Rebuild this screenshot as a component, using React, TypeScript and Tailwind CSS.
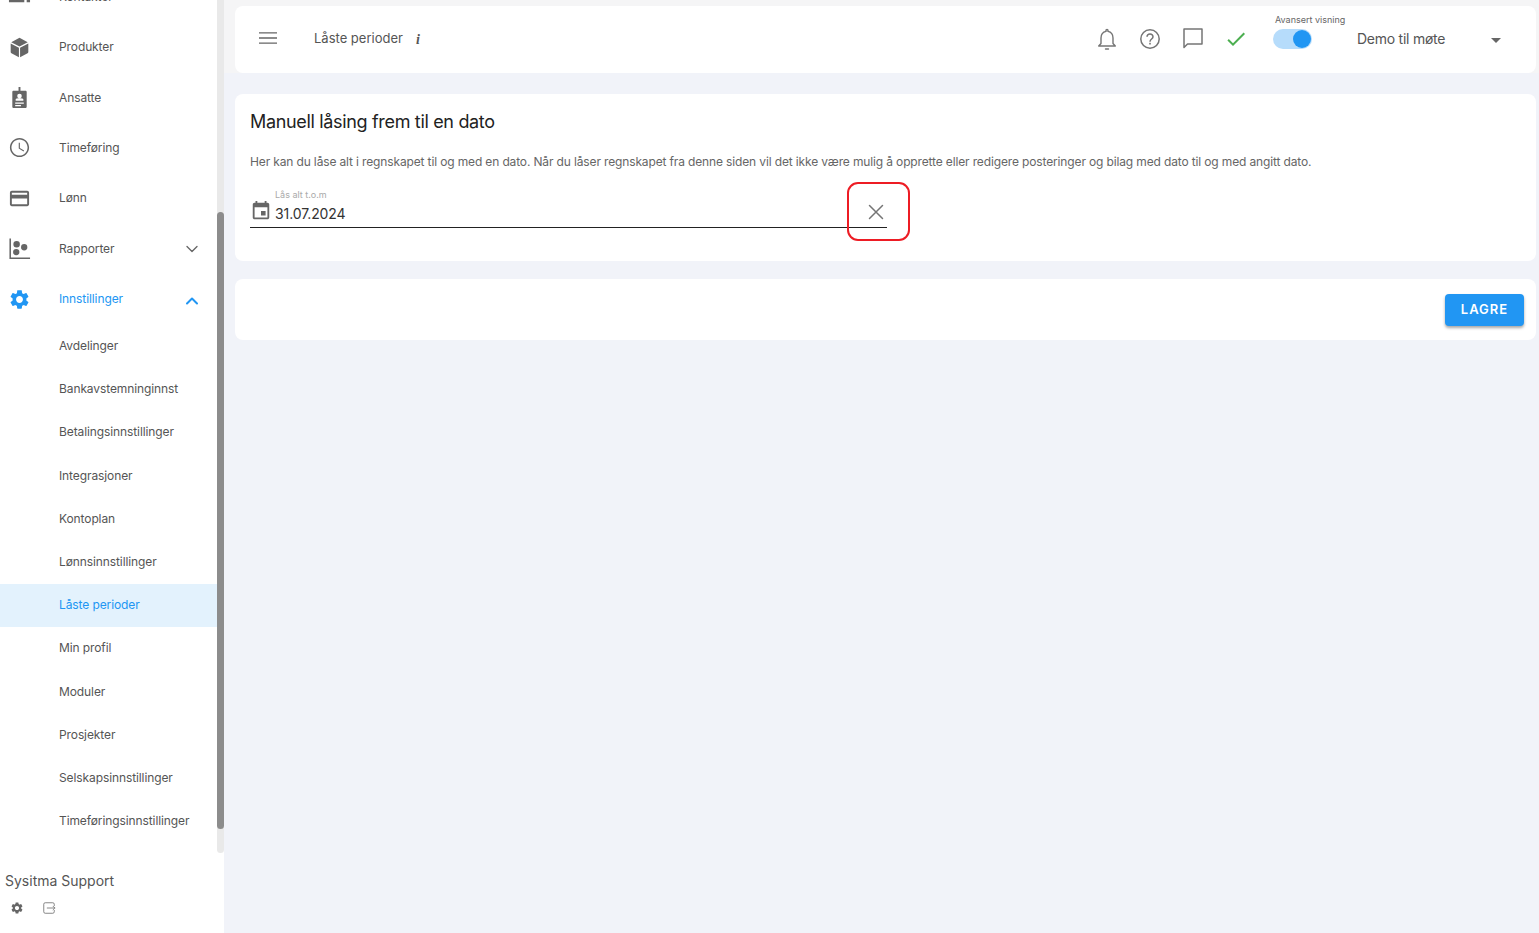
import React from "react";

const P = {
  menu: "M3 17.8h18v-1.4H3v1.4zm0-5.1h18v-1.4H3v1.4zM3 6.2v1.4h18V6.2H3z",
  gear: "M19.14 12.94c.04-.3.06-.61.06-.94 0-.32-.02-.64-.07-.94l2.03-1.58c.18-.14.23-.41.12-.61l-1.92-3.32c-.12-.22-.37-.29-.59-.22l-2.39.96c-.5-.38-1.03-.7-1.62-.94l-.36-2.54c-.04-.24-.24-.41-.48-.41h-3.84c-.24 0-.43.17-.47.41l-.36 2.54c-.59.24-1.13.57-1.62.94l-2.39-.96c-.22-.08-.47 0-.59.22L2.74 8.87c-.12.21-.08.47.12.61l2.03 1.58c-.05.3-.09.63-.09.94s.02.64.07.94l-2.03 1.58c-.18.14-.23.41-.12.61l1.92 3.32c.12.22.37.29.59.22l2.39-.96c.5.38 1.03.7 1.62.94l.36 2.54c.05.24.24.41.48.41h3.84c.24 0 .44-.17.47-.41l.36-2.54c.59-.24 1.13-.56 1.62-.94l2.39.96c.22.08.47 0 .59-.22l1.92-3.32c.12-.22.07-.47-.12-.61l-2.01-1.58zM12 15.6c-1.98 0-3.6-1.62-3.6-3.6s1.62-3.6 3.6-3.6 3.6 1.62 3.6 3.6-1.62 3.6-3.6 3.6z",
  event: "M17 12h-5v5h5v-5zM16 1v2H8V1H6v2H5c-1.11 0-1.99.9-1.99 2L3 19c0 1.1.89 2 2 2h14c1.1 0 2-.9 2-2V5c0-1.1-.9-2-2-2h-1V1h-2zm3 18H5V8h14v11z",
  check: "M9 16.17L4.83 12l-1.42 1.41L9 19 21 7l-1.41-1.41z",
  clock: "M11.99 2C6.47 2 2 6.48 2 12s4.47 10 9.99 10C17.52 22 22 17.52 22 12S17.52 2 11.99 2zM12 20.4c-4.64 0-8.4-3.76-8.4-8.4S7.36 3.6 12 3.6s8.4 3.76 8.4 8.4-3.76 8.4-8.4 8.4zm.4-13.4H11.2v6l5.05 3.05.6-1-4.45-2.65z",
  card: "M20 4H4c-1.11 0-1.99.89-1.99 2L2 18c0 1.11.89 2 2 2h16c1.11 0 2-.89 2-2V6c0-1.11-.89-2-2-2zm0 14H4v-6h16v6zm0-10H4V6h16v2z",
  drop: "M7 10l5 5 5-5z",
  cube: "M12 1.8l8.6 4.7-8.6 4.400-8.600-4.400zM2.800 7.900l8.600 4.400v10L3.600 18c-.5-.3-.8-.8-.8-1.400zM12.600 12.300l8.600-4.400v8.700c0 .6-.3 1.100-.8 1.400l-7.800 4.300z",
  badge: "M11 1h2v4h5.2c.7 0 1.3.6 1.3 1.3v15.4c0 .7-.6 1.3-1.3 1.3H5.800c-.7 0-1.300-.6-1.300-1.300V6.300c0-.7.6-1.300 1.300-1.300H11zM12 8a2.400 2.400 0 100 4.800A2.400 2.400 0 0012 8zM8 13.800v1.700h8v-1.700c0-.5-2-.9-4-.9s-4 .4-4 .9zM7.500 17.200v1.300h9v-1.300zM7.500 19.800v1.200h6v-1.200z",
  contact: "M1 0h16v18H1zM19.500 0H23v18h-3.500z",
  scatter: "M1.500 1.500h1.600v19.900H23V23H1.500zM9 4.200a3.400 3.400 0 110 6.800 3.400 3.400 0 010-6.800zM8.600 12.400a3.300 3.300 0 110 6.600 3.300 3.300 0 010-6.600zM16.900 7.400a3.300 3.300 0 110 6.600 3.300 3.300 0 010-6.600z",
};

const I = ({ d, className }: { d: string; className: string }) => (
  <svg viewBox="0 0 24 24" fill="currentColor" className={className}>
    <path d={d} />
  </svg>
);

const S = ({ d, className, w = 1.5 }: { d: string; className: string; w?: number }) => (
  <svg viewBox="0 0 24 24" fill="none" stroke="currentColor" strokeWidth={w} strokeLinejoin="round" strokeLinecap="round" className={className}>
    <path d={d} />
  </svg>
);

const NavRow = ({ icon, label, active, chevron }: { icon?: string; label: string; active?: boolean; chevron?: React.ReactNode }) => (
  <div className={`flex h-[50.45px] shrink-0 items-center ${active ? "text-[#2196f3]" : "text-[#555555]"}`}>
    <div className="flex w-[59px] shrink-0 pl-[8px]">
      {icon && <I d={icon} className={`size-[23px] ${active ? "text-[#2196f3]" : "text-[#666666]"}`} />}
    </div>
    <span className="flex-1 text-[12px] tracking-[-0.1px]">{label}</span>
    {chevron}
  </div>
);

const SubRow = ({ label, active }: { label: string; active?: boolean }) => (
  <div className={`flex h-[43.2px] shrink-0 items-center pl-[59px] text-[12px] tracking-[-0.1px] ${active ? "bg-[#e3f2fd] text-[#2196f3]" : "text-[#555555]"}`}>
    {label}
  </div>
);

const subs = [
  "Avdelinger",
  "Bankavstemninginnst",
  "Betalingsinnstillinger",
  "Integrasjoner",
  "Kontoplan",
  "Lønnsinnstillinger",
  "Låste perioder",
  "Min profil",
  "Moduler",
  "Prosjekter",
  "Selskapsinnstillinger",
  "Timeføringsinnstillinger",
];

export default function App() {
  return (
    <div className="flex h-[933px] w-[1539px] overflow-hidden bg-[#f1f3f9] font-['Inter','Liberation_Sans',sans-serif]">
      <aside className="flex w-[224px] shrink-0 flex-col bg-white">
        <div className="flex h-[853px] shrink-0 overflow-hidden">
          <nav className="flex min-w-0 flex-1 flex-col">
            <div className="-mt-[28.6px] flex flex-col">
              <NavRow icon={P.contact} label="Kontakter" />
              <NavRow icon={P.cube} label="Produkter" />
              <NavRow icon={P.badge} label="Ansatte" />
              <NavRow icon={P.clock} label="Timeføring" />
              <NavRow icon={P.card} label="Lønn" />
              <NavRow
                icon={P.scatter}
                label="Rapporter"
                chevron={<S d="M6 9l6 6 6-6" w={1.6} className="mr-[15px] size-[20px] text-[#666666]" />}
              />
              <NavRow
                icon={P.gear}
                label="Innstillinger"
                active
                chevron={<S d="M6 15l6-6 6 6" w={2.400} className="mr-[15px] mt-[4px] size-[20px]" />}
              />
              {subs.map((s) => (
                <SubRow key={s} label={s} active={s === "Låste perioder"} />
              ))}
            </div>
          </nav>
          <div className="w-[7px] shrink-0 rounded-b-[4px] bg-[#e9e9e9] pt-[212px]">
            <div className="h-[617px] rounded-[4px] bg-[#8c8c8c]" />
          </div>
        </div>
        <div className="pl-[5px] pt-[19px] text-[14px] leading-[18px] text-[#555555]">Sysitma Support</div>
        <div className="flex items-center gap-[18px] pl-[10px] pt-[11px] text-[#666666]">
          <I d={P.gear} className="size-[14px]" />
          <S d="M21 8V5.500A2.500 2.500 0 0018.500 3h-13A2.500 2.500 0 003 5.500v13A2.500 2.500 0 005.500 21h13a2.500 2.500 0 002.500-2.500V16M9 12h13M19 9l3 3-3 3" w={1.500} className="size-[14px] text-[#777777]" />
        </div>
      </aside>

      <main className="flex min-w-0 flex-1 flex-col">
        <div className="h-[73px] shrink-0 bg-[#f5f5f6] pl-[11px] pr-[3px] pt-[6px]">
          <header className="flex h-[67px] items-center rounded-[8px] bg-white">
            <I d={P.menu} className="-mt-[3px] ml-[21px] size-[24px] text-[#666666]" />
            <span className="-mt-[1px] ml-[34px] text-[13px] text-[#555555]">Låste perioder</span>
            <span className="-mt-[1px] ml-[13px] font-['Liberation_Serif',serif] text-[14px] font-bold italic text-[#555555]">i</span>
            <div className="ml-auto flex items-center">
              <S d="M12 2.500c.6 0 1 .4 1 1v.9c3 .6 5 3.100 5 6.600v5.500l2.300 2.500H3.700L6 16.500V11c0-3.500 2-6 5-6.600v-.9c0-.6.4-1 1-1zM10.500 22h3" w={1.400} className="-mt-[2px] size-[24px] text-[#757575]" />
              <svg viewBox="0 0 24 24" fill="none" className="-mt-[2px] ml-[19px] size-[24px] text-[#757575]">
                <circle cx="12" cy="12" r="9.200" stroke="currentColor" strokeWidth="1.500" />
                <path d="M9 9.800A3 3 0 0112 7a3 3 0 013 2.800c0 2.200-3 2.200-3 4.900" stroke="currentColor" strokeWidth="1.500" />
                <rect x="11.200" y="15.800" width="1.600" height="1.700" fill="currentColor" />
              </svg>
              <S d="M3 3h18v15H6.500L3 21.500z" w={1.500} className="-mt-[3px] ml-[19px] size-[24px] text-[#757575]" />
              <I d={P.check} className="-mt-[2px] ml-[19px] size-[24px] text-[#4caf50]" />
              <div className="ml-[25px] flex w-[84px] flex-col">
                <span className="-mt-[16px] mb-[4px] ml-[2px] text-[9px] leading-[11px] text-[#666666]">Avansert visning</span>
                <div className="flex h-[20px] w-[39px] items-center justify-end rounded-full bg-[#b6dcfb] pr-[1px]">
                  <div className="size-[18px] rounded-full bg-[#2196f3]" />
                </div>
              </div>
              <span className="-mt-[2px] w-[127px] text-[14px] tracking-[-0.25px] text-[#555555]">Demo til møte</span>
              <I d={P.drop} className="mr-[28px] size-[24px] text-[#666666]" />
            </div>
          </header>
        </div>

        <div className="flex flex-col pl-[11px] pr-[3px]">
          <section className="mt-[21px] h-[167px] shrink-0 rounded-[8px] bg-white px-[15px] pt-[16px]">
            <h1 className="text-[18px] leading-[24px] tracking-[-0.33px] text-[#222222]">Manuell låsing frem til en dato</h1>
            <p className="mt-[20px] text-[12px] leading-[16px] tracking-[-0.14px] text-[#666666]">
              Her kan du låse alt i regnskapet til og med en dato. Når du låser regnskapet fra denne siden vil det ikke være mulig å opprette eller redigere posteringer og bilag med dato til og med angitt dato.
            </p>
            <div className="relative mt-[16px] flex h-[42px] w-[637px] items-end border-b border-[#222222] pb-[5px]">
              <I d={P.event} className="size-[22px] text-[#666666]" />
              <div className="ml-[3px] flex flex-col">
                <span className="text-[9px] leading-[10px] text-[#aaaaaa]">Lås alt t.o.m</span>
                <span className="mt-[5px] text-[14px] leading-[17px] tracking-[-0.1px] text-[#333333]">31.07.2024</span>
              </div>
              <S d="M5.500 5.500l13 13M18.500 5.500l-13 13" w={1.500} className="absolute bottom-[3px] right-[-1px] size-[24px] text-[#757575]" />
              <div className="absolute -bottom-[14px] left-[597px] h-[59px] w-[63px] rounded-[11px] border-[2px] border-[#ed1c24]" />
            </div>
          </section>

          <section className="mt-[18px] flex h-[61px] shrink-0 items-center justify-end rounded-[8px] bg-white pr-[12px]">
            <button className="h-[32px] w-[79px] rounded-[4px] bg-[#2196f3] text-[13px] font-semibold tracking-[1px] text-white shadow-[0_2px_3px_rgba(0,0,0,0.35)]">
              LAGRE
            </button>
          </section>
        </div>
      </main>
    </div>
  );
}
